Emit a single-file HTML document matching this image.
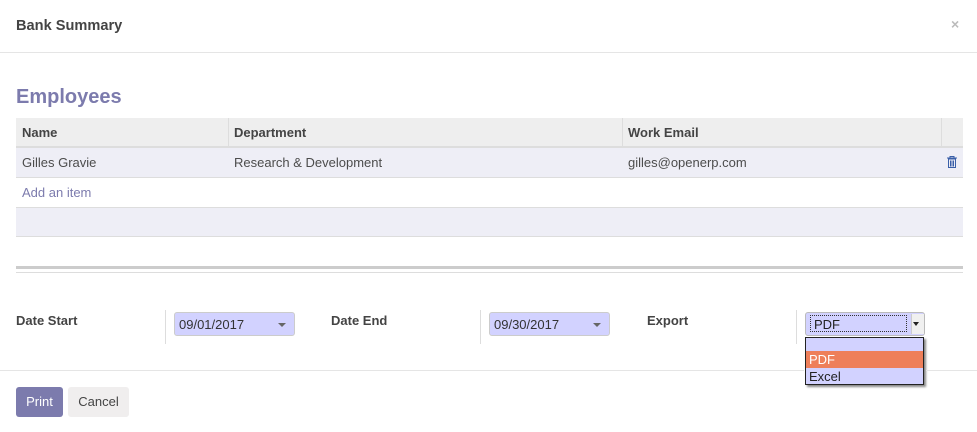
<!DOCTYPE html><html><head><style>
body{margin:0;width:977px;height:432px;position:relative;background:#fff;font-family:"Liberation Sans",sans-serif;font-size:13px;color:#4c4c4c;overflow:hidden}
.a{position:absolute}
.b{font-weight:bold;color:#444}
.inp{position:absolute;height:24px;background:#d2d2ff;border:1px solid #ccc;border-radius:3px;box-sizing:border-box;padding:4px 0 0 4px;color:#333}
.inp:after{content:"";position:absolute;right:8px;top:10px;border:4px solid transparent;border-top:4px solid #666;border-bottom:0}
</style></head><body>
<div class="a b" style="left:16px;top:18px;font-size:14.6px">Bank Summary</div>
<div class="a" style="left:951px;top:16px;color:#bbb;font-weight:bold;font-size:14px">×</div>
<div class="a" style="left:0;top:52px;width:977px;height:1px;background:#e5e5e5"></div>
<div class="a" style="left:16px;top:86px;font-size:20px;font-weight:bold;color:#7c7bad">Employees</div>
<div class="a" style="left:16px;top:118px;width:947px;height:30px;background:#eee;border-bottom:2px solid #ddd;box-sizing:border-box"></div>
<div class="a" style="left:228px;top:118px;width:1px;height:28px;background:#ddd"></div>
<div class="a" style="left:622px;top:118px;width:1px;height:28px;background:#ddd"></div>
<div class="a" style="left:941px;top:118px;width:1px;height:28px;background:#ddd"></div>
<div class="a b" style="left:22px;top:125px">Name</div>
<div class="a b" style="left:234px;top:125px">Department</div>
<div class="a b" style="left:628px;top:125px">Work Email</div>
<div class="a" style="left:16px;top:148px;width:947px;height:30px;background:#eeeef6;border-bottom:1px solid #ddd;box-sizing:border-box"></div>
<div class="a" style="left:22px;top:155px">Gilles Gravie</div>
<div class="a" style="left:234px;top:155px">Research &amp; Development</div>
<div class="a" style="left:628px;top:155px">gilles@openerp.com</div>
<svg class="a" style="left:947px;top:156px" width="10" height="12" viewBox="0 0 10 12"><path d="M0 2h10M3 2V0.5h4V2M1.5 3h7v8.5h-7z" fill="none" stroke="#3a5fa8" stroke-width="1"/><path d="M3.5 4.5v6M5 4.5v6M6.5 4.5v6" stroke="#3a5fa8"/></svg>
<div class="a" style="left:22px;top:185px;color:#7c7bad">Add an item</div>
<div class="a" style="left:16px;top:207px;width:947px;height:30px;background:#eeeef6;border-top:1px solid #ddd;border-bottom:1px solid #ddd;box-sizing:border-box"></div>
<div class="a" style="left:16px;top:266px;width:947px;height:3px;background:#ccc"></div>
<div class="a" style="left:16px;top:272px;width:947px;height:1px;background:#ddd"></div>
<div class="a b" style="left:16px;top:313px">Date Start</div>
<div class="a" style="left:165px;top:310px;width:1px;height:34px;background:#ddd"></div>
<div class="inp" style="left:174px;top:312px;width:121px">09/01/2017</div>
<div class="a b" style="left:331px;top:313px">Date End</div>
<div class="a" style="left:480px;top:310px;width:1px;height:34px;background:#ddd"></div>
<div class="inp" style="left:489px;top:312px;width:121px">09/30/2017</div>
<div class="a b" style="left:647px;top:313px">Export</div>
<div class="a" style="left:796px;top:310px;width:1px;height:34px;background:#ddd"></div>
<div class="a" style="left:805px;top:312px;width:120px;height:24px;background:#d2d2ff;border:1px solid #bbb;border-radius:3px;box-sizing:border-box"></div>
<div class="a" style="left:810px;top:315px;width:97px;height:17px;border:1px dotted #333;box-sizing:border-box;padding:1px 0 0 3px;color:#222">PDF</div>
<div class="a" style="left:911px;top:314px;width:12px;height:20px;background:#f0f0f0;border-left:1px solid #ccc"></div>
<div class="a" style="left:913px;top:322px;border:3px solid transparent;border-top:4px solid #222;border-bottom:0"></div>
<div class="a" style="left:805px;top:337px;width:119px;height:48px;background:#d2d2ff;border:1px solid #222;box-shadow:2px 2px 2px #888;box-sizing:border-box"></div>
<div class="a" style="left:806px;top:351px;width:117px;height:17px;background:#ee7f5a;color:#fff;padding:1px 0 0 3px;box-sizing:border-box">PDF</div>
<div class="a" style="left:809px;top:369px;color:#222">Excel</div>
<div class="a" style="left:0;top:370px;width:804px;height:1px;background:#e5e5e5"></div>
<div class="a" style="left:926px;top:370px;width:51px;height:1px;background:#e5e5e5"></div>
<div class="a" style="left:16px;top:387px;width:47px;height:30px;background:#7c7bad;color:#fff;border-radius:3px;text-align:center;line-height:30px">Print</div>
<div class="a" style="left:68px;top:387px;width:61px;height:30px;background:#f0eeee;color:#444;border-radius:3px;text-align:center;line-height:30px">Cancel</div>
</body></html>
